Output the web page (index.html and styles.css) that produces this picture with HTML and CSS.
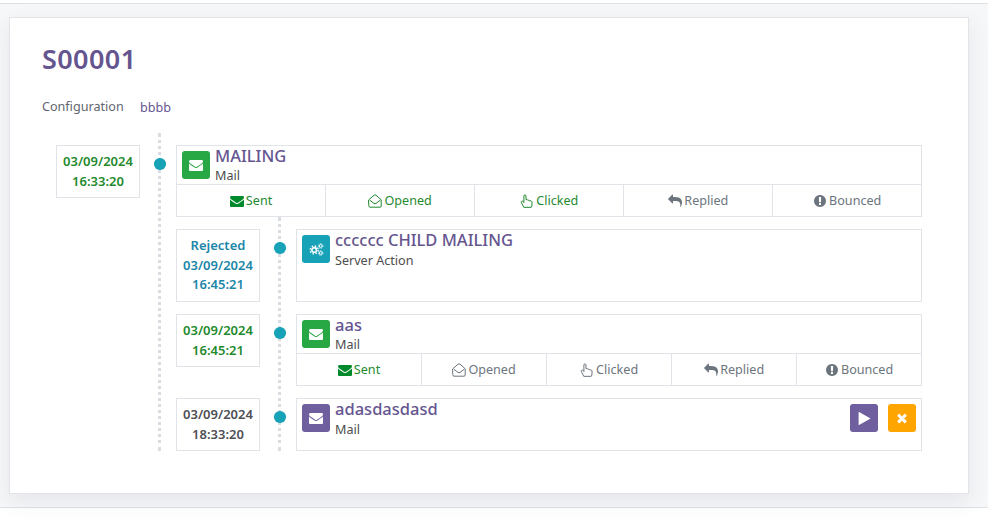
FILE: index.html
```html
<!DOCTYPE html>
<html lang="en">
<head>
<meta charset="utf-8">
<title>S00001</title>
<link rel="stylesheet" href="styles.css">
</head>
<body>
<svg class="sprite" xmlns="http://www.w3.org/2000/svg">
  <symbol id="i-env" viewBox="0 0 1792 1792"><path fill="currentColor" d="M1792 710v794q0 66-47 113t-113 47h-1472q-66 0-113-47t-47-113v-794q44 49 101 87 362 246 497 345 57 42 92.500 65.500t94.500 48 110 24.500h2q51 0 110-24.500t94.500-48 92.500-65.500q170-123 498-345 57-39 100-87zm0-294q0 79-49 151t-122 123q-376 261-468 325-10 7-42.500 30.500t-54 38-52 32.500-57.500 27-50 9h-2q-23 0-50-9t-57.500-27-52-32.500-54-38-42.500-30.500q-91-64-262-182.500t-205-142.500q-62-42-117-115.500t-55-136.500q0-78 41.500-130t118.500-52h1472q65 0 112.500 47t47.500 113z"/></symbol>
  <symbol id="i-open" viewBox="0 0 14 14"><path fill="none" stroke="currentColor" stroke-width="1" stroke-linejoin="round" stroke-linecap="round" d="M.8 5.800 6 1.200q1-.8 2 0l5.200 4.600V12q0 1.200-1.200 1.200H2q-1.200 0-1.200-1.200zM2 6.400 6 9.400q1 .7 2 0l4-3"/></symbol>
  <symbol id="i-hand" viewBox="0 0 14 14"><path fill="none" stroke="currentColor" stroke-width="1" stroke-linejoin="round" stroke-linecap="round" d="M3.600 13 1.400 8.600q-.5-1.100.4-1.500.8-.3 1.400.5l.7 1V2q0-1.100 1-1.100T6 2v3.600q1.600-.4 1.700.6 1.500-.5 1.800.7 2-.6 2.500.9V11q0 1-.6 2z"/></symbol>
  <symbol id="i-reply" viewBox="0 0 1792 1792"><path fill="currentColor" d="M1792 1120q0 166-127 451-3 7-10.500 24t-13.500 30-13 22q-12 17-28 17-15 0-23.500-10t-8.500-25q0-9 2.500-26.500t2.500-23.500q5-68 5-123 0-101-17.500-181t-48.500-138.500-80-101-105.500-69.500-133-42.500-154-21.500-175.500-6h-224v256q0 26-19 45t-45 19-45-19l-512-512q-19-19-19-45t19-45l512-512q19-19 45-19t45 19 19 45v256h224q713 0 875 403 53 134 53 333z"/></symbol>
  <symbol id="i-excl" viewBox="0 0 1792 1792"><path fill="currentColor" d="M896 128q209 0 385.500 103t279.500 279.500 103 385.500-103 385.500-279.500 279.500-385.500 103-385.500-103-279.500-279.500-103-385.500 103-385.500 279.500-279.500 385.500-103zm128 1247v-190q0-14-9-23.500t-22-9.500h-192q-13 0-23 10t-10 23v190q0 13 10 23t23 10h192q13 0 22-9.500t9-23.500zm-2-344l18-621q0-12-10-18-10-8-24-8h-220q-14 0-24 8-10 6-10 18l17 621q0 10 10 17.500t24 7.500h185q14 0 23.500-7.500t10.500-17.500z"/></symbol>
  <symbol id="i-play" viewBox="0 0 1792 1792"><path fill="currentColor" d="M1576 927l-1328 738q-23 13-39.500 3t-16.500-36v-1472q0-26 16.500-36t39.500 3l1328 738q23 13 23 31t-23 31z"/></symbol>
  <symbol id="i-times" viewBox="0 0 1792 1792"><path fill="currentColor" d="M1490 1322q0 40-28 68l-136 136q-28 28-68 28t-68-28l-294-294-294 294q-28 28-68 28t-68-28l-136-136q-28-28-28-68t28-68l294-294-294-294q-28-28-28-68t28-68l136-136q28-28 68-28t68 28l294 294 294-294q28-28 68-28t68 28l136 136q28 28 28 68t-28 68l-294 294 294 294q28 28 28 68z"/></symbol>
  <symbol id="i-cogs" viewBox="0 0 16 14">
    <circle cx="5.500" cy="7.500" r="2.500" fill="none" stroke="currentColor" stroke-width="1.700"/>
    <circle cx="5.500" cy="7.500" r="4.300" fill="none" stroke="currentColor" stroke-width="1.400" stroke-dasharray="1.700 1.680"/>
    <circle cx="12.500" cy="3.200" r="1.500" fill="none" stroke="currentColor" stroke-width="1"/>
    <circle cx="12.500" cy="3.200" r="2.500" fill="none" stroke="currentColor" stroke-width="1" stroke-dasharray="1 .96"/>
    <circle cx="12.500" cy="10.800" r="1.500" fill="none" stroke="currentColor" stroke-width="1"/>
    <circle cx="12.500" cy="10.800" r="2.500" fill="none" stroke="currentColor" stroke-width="1" stroke-dasharray="1 .96"/>
  </symbol>
</svg>

<main class="page">
  <section class="sheet">
    <h1 class="title">S00001</h1>
    <div class="field"><span class="field-label">Configuration</span><span class="field-value">bbbb</span></div>

    <div class="tree tree-root">
      <article class="node">
        <div class="date is-green"><div>03/09/2024</div><div>16:33:20</div></div>
        <div class="rail"><span class="dot"></span></div>
        <div class="box">
          <div class="head">
            <span class="badge bg-green"><svg class="badge-icon"><use href="#i-env"/></svg></span>
            <div class="names"><div class="name">MAILING</div><div class="kind">Mail</div></div>
          </div>
          <div class="stats">
            <div class="stat is-green"><svg class="sicon is-sent"><use href="#i-env"/></svg>Sent</div>
            <div class="stat is-green"><svg class="sicon"><use href="#i-open"/></svg>Opened</div>
            <div class="stat is-green"><svg class="sicon"><use href="#i-hand"/></svg>Clicked</div>
            <div class="stat"><svg class="sicon"><use href="#i-reply"/></svg>Replied</div>
            <div class="stat"><svg class="sicon"><use href="#i-excl"/></svg>Bounced</div>
          </div>
        </div>
      </article>

      <div class="tree tree-child">
        <article class="node">
          <div class="date date-tall is-teal"><div>Rejected</div><div>03/09/2024</div><div>16:45:21</div></div>
          <div class="rail"><span class="dot"></span></div>
          <div class="box box-tall">
            <div class="head">
              <span class="badge bg-teal"><svg class="badge-icon cogs"><use href="#i-cogs"/></svg></span>
              <div class="names names-loose"><div class="name">cccccc CHILD MAILING</div><div class="kind">Server Action</div></div>
            </div>
          </div>
        </article>

        <article class="node">
          <div class="date is-green"><div>03/09/2024</div><div>16:45:21</div></div>
          <div class="rail"><span class="dot"></span></div>
          <div class="box">
            <div class="head">
              <span class="badge bg-green"><svg class="badge-icon"><use href="#i-env"/></svg></span>
              <div class="names"><div class="name">aas</div><div class="kind">Mail</div></div>
            </div>
            <div class="stats">
              <div class="stat is-green"><svg class="sicon is-sent"><use href="#i-env"/></svg>Sent</div>
              <div class="stat"><svg class="sicon"><use href="#i-open"/></svg>Opened</div>
              <div class="stat"><svg class="sicon"><use href="#i-hand"/></svg>Clicked</div>
              <div class="stat"><svg class="sicon"><use href="#i-reply"/></svg>Replied</div>
              <div class="stat"><svg class="sicon"><use href="#i-excl"/></svg>Bounced</div>
            </div>
          </div>
        </article>

        <article class="node">
          <div class="date is-dark"><div>03/09/2024</div><div>18:33:20</div></div>
          <div class="rail"><span class="dot"></span></div>
          <div class="box">
            <div class="head head-last">
              <span class="badge bg-purple"><svg class="badge-icon"><use href="#i-env"/></svg></span>
              <div class="names names-loose grow"><div class="name">adasdasdasd</div><div class="kind">Mail</div></div>
              <div class="actions">
                <span class="badge bg-purple"><svg class="play"><use href="#i-play"/></svg></span>
                <span class="badge bg-orange"><svg class="times"><use href="#i-times"/></svg></span>
              </div>
            </div>
          </div>
        </article>
      </div>
    </div>
  </section>
</main>
</body>
</html>
```
FILE: styles.css
```css
* { box-sizing: border-box; }
html, body { margin: 0; padding: 0; background: #fff; }
body { height: 528px; overflow: hidden; font-family: "Noto Sans", "Open Sans", sans-serif; font-size: 12.6px; color: #4c4c4c; }
.sprite { display: none; }

.page { margin-top: 3px; height: 505px; padding: 13px 19px 0 9px; background: #f6f7f9; border-top: 1px solid #dee1e6; border-bottom: 1px solid #dee1e6; }
.sheet { height: 477px; padding: 23px 46px 0 32px; background: #fff; border: 1px solid #e2e4e8; box-shadow: 0 8px 20px rgba(60, 65, 80, .09); }

.title { margin: 0; height: 36px; font-size: 27px; line-height: 36px; font-weight: 600; letter-spacing: .4px; color: #65558f; }
.field { display: flex; align-items: flex-start; height: 20px; margin-top: 20px; line-height: 20px; }
.field-label { width: 98px; color: #5f6670; }
.field-value { margin-top: 1px; color: #65558f; }

.tree { position: relative; }
.tree::before { content: ""; position: absolute; top: 0; bottom: 0; border-left: 3px dotted #d9dce1; }
.tree-root { margin: 16px 0 0 14px; padding-top: 12px; }
.tree-root::before { left: 102px; }
.tree-child { margin: 12px 0 0 120px; }
.tree-child::before { left: 102px; top: -12px; }

.node { display: flex; align-items: flex-start; }
.tree-child .node { margin-bottom: 12px; }
.tree-child .node:last-child { margin-bottom: 0; }

.date { flex: none; width: 84px; height: 53px; padding: 6px 0; border: 1px solid #e0e3e7; background: #fff; text-align: center; font-size: 13px; line-height: 19.5px; font-weight: 600; }
.date-tall { height: 73px; }
.is-green { color: #1f8a2e; }
.is-teal { color: #1c87a8; }
.is-dark { color: #4f4f55; }

.rail { flex: none; position: relative; width: 36px; height: 36px; }
.dot { position: absolute; left: 14px; top: 13px; width: 11.5px; height: 11.5px; border-radius: 50%; background: #17a2b8; }

.box { flex: 1; min-width: 0; border: 1px solid #e0e3e7; background: #fff; }
.box-tall { height: 73px; }

.head { display: flex; align-items: flex-start; height: 38px; padding: 5px 5px 0; }
.head-last { height: 51px; }
.badge { flex: none; display: flex; align-items: center; justify-content: center; width: 28px; height: 28px; border-radius: 3px; color: #fff; }
.bg-green { background: #28a745; }
.bg-teal { background: #17a2b8; }
.bg-purple { background: #6f5f9e; }
.bg-orange { background: #ffa500; }
.badge-icon { width: 14px; height: 14px; }
.cogs { width: 15px; height: 13px; }
.play { width: 15px; height: 15px; }
.times { width: 14px; height: 14px; }

.names { margin-left: 5px; margin-top: -6px; }
.grow { flex: 1; }
.name { font-size: 16.5px; line-height: 22px; font-weight: 500; color: #65558f; }
.kind { font-size: 12.6px; line-height: 18px; color: #4c4c4c; }
.names-loose .kind { margin-top: 1px; }
.actions { display: flex; gap: 10px; }

.stats { display: grid; grid-template-columns: repeat(4, 20.04%) 1fr; border-top: 1px solid #e0e3e7; }
.stat { display: flex; align-items: center; justify-content: center; gap: 2px; height: 31px; border-right: 1px solid #e0e3e7; color: #6c757d; }
.stat:last-child { border-right: 0; }
.stat.is-green { color: #1f8a2e; }
.sicon { width: 14px; height: 14px; }
.is-sent { color: #008a2c; }
```
